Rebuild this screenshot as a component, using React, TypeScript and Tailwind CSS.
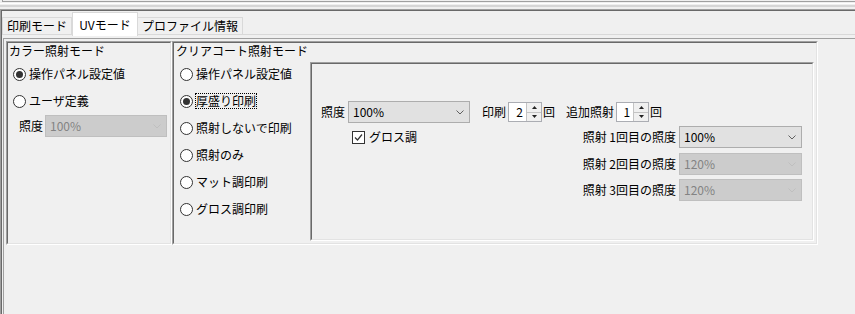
import React from "react";

function Chevron({ color }: { color: string }) {
  return (
    <svg width="8" height="5" viewBox="0 0 8 5">
      <polyline points="0.5,0.5 4,4 7.5,0.5" fill="none" stroke={color} strokeWidth="1" />
    </svg>
  );
}

function Combo({ value, disabled, className }: { value: string; disabled?: boolean; className: string }) {
  return (
    <div
      className={
        "flex h-[22px] items-center justify-between border pl-[4px] pr-[5px] " +
        (disabled ? "border-[#bfbfbf] bg-[#cccccc] text-[#838383] " : "border-[#adadad] bg-[#e1e1e1] text-black ") +
        className
      }
    >
      <span className="leading-[16px]">{value}</span>
      <Chevron color={disabled ? "#bfbfbf" : "#606060"} />
    </div>
  );
}

function Radio({ label, checked, focus }: { label: string; checked?: boolean; focus?: boolean }) {
  return (
    <div className="flex h-[22px] items-center">
      <div className="flex h-[13px] w-[13px] items-center justify-center rounded-full border border-[#333333] bg-white">
        {checked && <div className="h-[7px] w-[7px] rounded-full bg-[#333333]" />}
      </div>
      {focus ? (
        <span className="ml-[2px] border border-dotted border-black px-0 leading-[14px]">{label}</span>
      ) : (
        <span className="ml-[3px] leading-[16px]">{label}</span>
      )}
    </div>
  );
}

function Sunken({ className, children }: { className: string; children?: React.ReactNode }) {
  return (
    <div className={"border border-t-[#a0a0a0] border-l-[#a0a0a0] border-r-white border-b-white " + className}>
      <div className="flex h-full flex-col border border-t-[#696969] border-l-[#696969] border-r-[#e3e3e3] border-b-[#e3e3e3]">
        {children}
      </div>
    </div>
  );
}

function Spinner({ value, className }: { value: string; className: string }) {
  return (
    <div className={"flex h-[20px] border border-[#abadb3] bg-white " + className}>
      <div className="flex flex-1 items-center justify-end pr-[3px] leading-[16px]">{value}</div>
      <div className="flex w-[15px] flex-col border-l border-[#c4c4c4]">
        <div className="flex flex-1 items-center justify-center border-b border-[#c4c4c4] bg-[#f0f0f0]">
          <svg width="5" height="3" viewBox="0 0 5 3">
            <polygon points="2.5,0 5,3 0,3" fill="#222" />
          </svg>
        </div>
        <div className="flex flex-1 items-center justify-center bg-[#f0f0f0]">
          <svg width="5" height="3" viewBox="0 0 5 3">
            <polygon points="0,0 5,0 2.5,3" fill="#222" />
          </svg>
        </div>
      </div>
    </div>
  );
}

export default function App() {
  return (
    <div className="flex h-[314px] w-[855px] flex-col overflow-hidden bg-[#f0f0f0] font-['Noto_Sans_CJK_JP','Noto_Sans',sans-serif] text-[12px] text-black">
      {/* top strip */}
      <div className="h-[9px] shrink-0">
        <div className="ml-[2px] h-[2px] border-b border-l border-[#a0a0a0]" />
        <div className="h-[2px] border-b border-white" />
        <div className="h-[1px]" />
        <div className="h-[2px] bg-[#d6d6d6]" />
      </div>
      <div className="flex flex-1 flex-col border-l border-t border-[#a0a0a0]">
        <div className="flex flex-1 flex-col border-l border-t border-[#696969]">
          {/* tabs */}
          <div className="flex h-[24px] shrink-0 items-end border-b border-[#d9d9d9]">
            <div className="flex h-[17px] w-[70px] items-center justify-center border-l border-r border-t border-[#d9d9d9] leading-[16px]">
              印刷モード
            </div>
            <div className="relative z-10 mb-[-2px] flex h-[24px] w-[66px] items-start justify-center border-l border-r border-t border-[#d9d9d9] bg-white pt-[4px] leading-[16px]">
              UVモード
            </div>
            <div className="flex h-[17px] w-[105px] items-center justify-center border-r border-t border-[#d9d9d9] leading-[16px]">
              プロファイル情報
            </div>
          </div>
          {/* page */}
          <div className="flex flex-1 flex-col pl-[1px] pt-[3px]">
            <div className="flex-1 border-l border-t border-[#a0a0a0] pl-[2px] pt-[2px]">
              <div className="flex">
                {/* left group */}
                <Sunken className="h-[204px] w-[166px]">
                  <div className="h-[16px] pl-[1px] leading-[16px]">カラー照射モード</div>
                  <div className="mt-[4px] flex flex-col gap-[5px] pl-[5px]">
                    <Radio label="操作パネル設定値" checked />
                    <Radio label="ユーザ定義" />
                  </div>
                  <div className="mt-[3px] flex h-[22px] items-center pl-[11px]">
                    <span className="leading-[16px]">照度</span>
                    <Combo value="100%" disabled className="ml-[2px] w-[122px]" />
                  </div>
                </Sunken>
                {/* middle group */}
                <Sunken className="h-[204px] w-[646px]">
                  <div className="h-[16px] pl-[2px] leading-[16px]">クリアコート照射モード</div>
                  <div className="mt-[3px] flex">
                    <div className="flex w-[136px] flex-col gap-[5px] pl-[6px] pt-[1px]">
                      <Radio label="操作パネル設定値" />
                      <Radio label="厚盛り印刷" checked focus />
                      <Radio label="照射しないで印刷" />
                      <Radio label="照射のみ" />
                      <Radio label="マット調印刷" />
                      <Radio label="グロス調印刷" />
                    </div>
                    <Sunken className="h-[179px] w-[504px]">
                      <div className="mt-[37px] flex h-[22px] items-center pl-[9px]">
                        <span className="leading-[16px]">照度</span>
                        <Combo value="100%" className="ml-[3px] w-[122px]" />
                        <span className="ml-[12px] leading-[16px]">印刷</span>
                        <Spinner value="2" className="ml-[2px] w-[34px]" />
                        <span className="ml-[1px] leading-[16px]">回</span>
                        <span className="ml-[11px] leading-[16px]">追加照射</span>
                        <Spinner value="1" className="ml-[2px] w-[33px]" />
                        <span className="ml-[1px] leading-[16px]">回</span>
                      </div>
                      <div className="mt-[3px] flex">
                        <div className="ml-[40px] flex h-[22px] items-center">
                          <div className="flex h-[13px] w-[13px] items-center justify-center border border-[#333333] bg-white">
                            <svg width="11" height="11" viewBox="0 0 11 11">
                              <polyline points="2,5.5 4.5,8 9,2.5" fill="none" stroke="#333" strokeWidth="1.2" />
                            </svg>
                          </div>
                          <span className="ml-[4px] leading-[16px]">グロス調</span>
                        </div>
                        <div className="ml-auto mr-[10px] flex flex-col">
                          <div className="flex h-[22px] items-center justify-end">
                            <span className="leading-[16px]">照射 1回目の照度</span>
                            <Combo value="100%" className="ml-[3px] w-[123px]" />
                          </div>
                          <div className="mt-[5px] flex h-[22px] items-center justify-end">
                            <span className="leading-[16px]">照射 2回目の照度</span>
                            <Combo value="120%" disabled className="ml-[3px] w-[123px]" />
                          </div>
                          <div className="mt-[4px] flex h-[22px] items-center justify-end">
                            <span className="leading-[16px]">照射 3回目の照度</span>
                            <Combo value="120%" disabled className="ml-[3px] w-[123px]" />
                          </div>
                        </div>
                      </div>
                    </Sunken>
                  </div>
                </Sunken>
              </div>
            </div>
          </div>
        </div>
      </div>
    </div>
  );
}
